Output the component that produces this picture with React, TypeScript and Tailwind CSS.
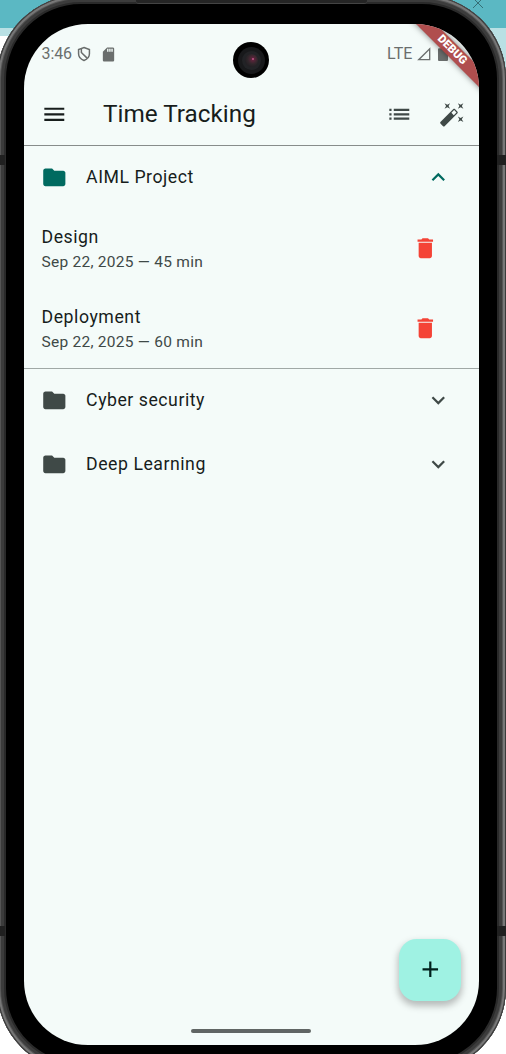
import React from "react";

const PATHS = {
  folder: "M10 4H4c-1.1 0-1.99.9-1.99 2L2 18c0 1.1.9 2 2 2h16c1.1 0 2-.9 2-2V8c0-1.1-.9-2-2-2h-8l-2-2z",
  trash: "M6 19c0 1.1.9 2 2 2h8c1.1 0 2-.9 2-2V7H6v12zM19 4h-3.5l-1-1h-5l-1 1H5v2h14V4z",
  down: "M16.59 8.59L12 13.17 7.41 8.59 6 10l6 6 6-6z",
  up: "M12 8l-6 6 1.41 1.41L12 10.83l4.59 4.58L18 14z",
  menu: "M3 18h18v-2H3v2zm0-5h18v-2H3v2zm0-7v2h18V6H3z",
  list: "M3 13h2v-2H3v2zm0 4h2v-2H3v2zm0-8h2V7H3v2zm4 4h14v-2H7v2zm0 4h14v-2H7v2zM7 7v2h14V7H7z",
  wand: "M7.5 5.6L10 7 8.6 4.5 10 2 7.5 3.4 5 2l1.4 2.5L5 7zm12 9.8L17 14l1.4 2.5L17 19l2.5-1.4L22 19l-1.4-2.5L22 14zM22 2l-2.5 1.4L17 2l1.4 2.5L17 7l2.5-1.4L22 7l-1.4-2.5zm-7.63 5.29c-.39-.39-1.02-.39-1.41 0L1.29 18.96c-.39.39-.39 1.02 0 1.41l2.34 2.34c.39.39 1.02.39 1.41 0L16.7 11.05c.39-.39.39-1.02 0-1.41l-2.33-2.35zm-1.03 5.49l-2.12-2.12 2.44-2.44 2.12 2.12-2.44 2.44z",
  plus: "M19 13h-6v6h-2v-6H5v-2h6V5h2v6h6v2z",
  sd: "M18 2h-8L4.02 8 4 20c0 1.1.9 2 2 2h12c1.1 0 2-.9 2-2V4c0-1.1-.9-2-2-2zm-6 6h-2V4h2v4zm3 0h-2V4h2v4zm3 0h-2V4h2v4z",
};

function Icon({ name, className = "size-[26.6px]" }: { name: keyof typeof PATHS; className?: string }) {
  return (
    <svg viewBox="0 0 24 24" fill="currentColor" className={`shrink-0 ${className}`}>
      <path d={PATHS[name]} />
    </svg>
  );
}

function StatusBar() {
  return (
    <div className="flex h-[60px] items-center pr-[31px] pl-[17.5px] text-[16px] text-[#6a6e6d]">
      <span className="w-[31px] tracking-[-0.1px]">3:46</span>
      <svg viewBox="0 0 16 18" className="ml-[4.5px] h-[16px] w-[14px]" fill="none" stroke="currentColor" strokeWidth="1.7">
        <path d="M8 1.5 14.2 4v4.8c0 3.4-2.4 6.2-6.2 7.7-3.8-1.5-6.2-4.3-6.2-7.7V4z" />
        <path d="M5 3.2v4l6.5 6.5" />
      </svg>
      <Icon name="sd" className="ml-[9px] size-[17px]" />
      <span className="ml-auto tracking-[0.1px]">LTE</span>
      <svg viewBox="0 0 14 14" className="ml-[4.5px] size-[14px]" fill="none" stroke="currentColor" strokeWidth="1.3">
        <path d="M12.7 1.7V12.7H1.7z" />
      </svg>
      <svg viewBox="0 0 10 14" className="ml-[7px] h-[14px] w-[10px]" fill="currentColor">
        <path d="M3 0h4v1.2h2q1 0 1 1V13q0 1-1 1H1q-1 0-1-1V2.2q0-1 1-1h2z" />
      </svg>
    </div>
  );
}

function AppBar() {
  return (
    <header className="flex h-[62px] items-center border-b border-[#878c8b] pr-[13.5px] pl-[17px] text-[#3f4947]">
      <Icon name="menu" className="size-[26.6px] text-[#171d1c]" />
      <h1 className="ml-[35.5px] text-[24.3px] text-[#171d1c]">Time Tracking</h1>
      <Icon name="list" className="ml-auto size-[26.6px]" />
      <Icon name="wand" className="ml-[26px] size-[26.6px]" />
    </header>
  );
}

function ProjectHeader({ title, open = false }: { title: string; open?: boolean }) {
  return (
    <div className={`flex h-[62px] items-center pr-[27px] pl-[17px] ${open ? "pt-px text-[#006a60]" : "text-[#3f4947]"}`}>
      <Icon name="folder" />
      <span className="mb-px ml-[18.5px] text-[17.7px] leading-[26px] tracking-[0.52px] text-[#171d1c]">{title}</span>
      <Icon name={open ? "up" : "down"} className="ml-auto size-[26.6px]" />
    </div>
  );
}

function Entry({ title, detail }: { title: string; detail: string }) {
  return (
    <div className="flex h-[80px] items-center pr-[40px] pl-[17.5px]">
      <div className="pt-[2px]">
        <div className="text-[17.7px] leading-[26px] tracking-[0.55px] text-[#171d1c]">{title}</div>
        <div className="text-[15.5px] leading-[24px] tracking-[0.26px] text-[#3f4947]">{detail}</div>
      </div>
      <Icon name="trash" className="ml-auto size-[26.6px] text-[#f44336]" />
    </div>
  );
}

export default function App() {
  return (
    <div className="relative h-[1054px] w-[506px] overflow-hidden bg-white [font-family:Roboto,sans-serif]">
      <div className="absolute inset-x-0 top-0 h-[36px] bg-[#b9e0e4]">
        <div className="h-[28px] bg-[#5bb8c3]" />
      </div>
      <div className="absolute top-[28px] right-0 h-[40px] w-[20px] rounded-tr-[5px] bg-[#b9e0e4]" />
      <svg viewBox="0 0 12 12" className="absolute top-[-3px] left-[472px] size-[12px] stroke-[#356e75]">
        <path d="M1 1 11 11M11 1 1 11" />
      </svg>

      <div className="relative -mt-[5px] -ml-[3px] h-[1077px] w-[509px] rounded-[84px] bg-black px-[27px] pt-[29px] shadow-[inset_0_0_0_1px_#3a3a3a,inset_0_0_0_3px_#777777,inset_0_0_0_4px_#555555,inset_0_0_0_7px_#3c3c3c,inset_0_0_0_9px_#2a2a2a]">
        <div className="absolute top-[5px] left-[139px] h-[4px] w-[231px] rounded-b-[3px] border-b border-[#444444] bg-[#252525]" />
        <div className="absolute top-[160px] left-0 h-[10px] w-[8px] bg-[#202020]" />
        <div className="absolute top-[160px] right-0 h-[10px] w-[9px] bg-[#202020]" />
        <div className="absolute top-[931px] left-0 h-[10px] w-[8px] bg-[#202020]" />
        <div className="absolute top-[931px] right-0 h-[10px] w-[9px] bg-[#202020]" />

        <main className="relative flex h-[1021px] w-[455px] flex-col overflow-hidden rounded-[64px] bg-[#f4fbf9]">
          <StatusBar />
          <AppBar />
          <section className="border-b border-[#a0a8a6]">
            <ProjectHeader title="AIML Project" open />
            <Entry title="Design" detail="Sep 22, 2025 — 45 min" />
            <Entry title="Deployment" detail="Sep 22, 2025 — 60 min" />
          </section>
          <section className="flex flex-col gap-[2px] pt-[0.5px]">
            <ProjectHeader title="Cyber security" />
            <ProjectHeader title="Deep Learning" />
          </section>
          <button className="mt-auto mr-[18px] mb-[28.5px] flex size-[62px] items-center justify-center self-end rounded-[17.7px] bg-[#9ff2e3] text-[#00201c] shadow-[0_4px_7px_1px_rgba(0,0,0,0.26)]">
            <Icon name="plus" />
          </button>
          <div className="mr-px mb-[12px] h-[4px] w-[120px] self-center rounded-full bg-[#606564]" />

          <div className="absolute top-[18px] left-[209px] flex size-[36px] items-center justify-center rounded-full bg-black">
            <div className="flex size-[27px] items-center justify-center rounded-full bg-[#18191b]">
              <div className="flex size-[19px] items-center justify-center rounded-full bg-[#222326]">
                <div className="flex size-[13px] items-center justify-center rounded-full bg-[radial-gradient(circle_at_60%_40%,#6b2440,#30272b_45%,#15171b)]">
                  <div className="mb-[2px] ml-[3px] size-[2px] rounded-full bg-[#c0538b]" />
                </div>
              </div>
            </div>
          </div>
          <div className="absolute top-[19px] left-[373px] flex h-[14px] w-[110px] rotate-45 items-center justify-center bg-[#ac4444]/95 text-[11.3px] font-black text-white shadow-[0_0_6px_rgba(0,0,0,0.5)]">
            DEBUG
          </div>
        </main>
      </div>
    </div>
  );
}
